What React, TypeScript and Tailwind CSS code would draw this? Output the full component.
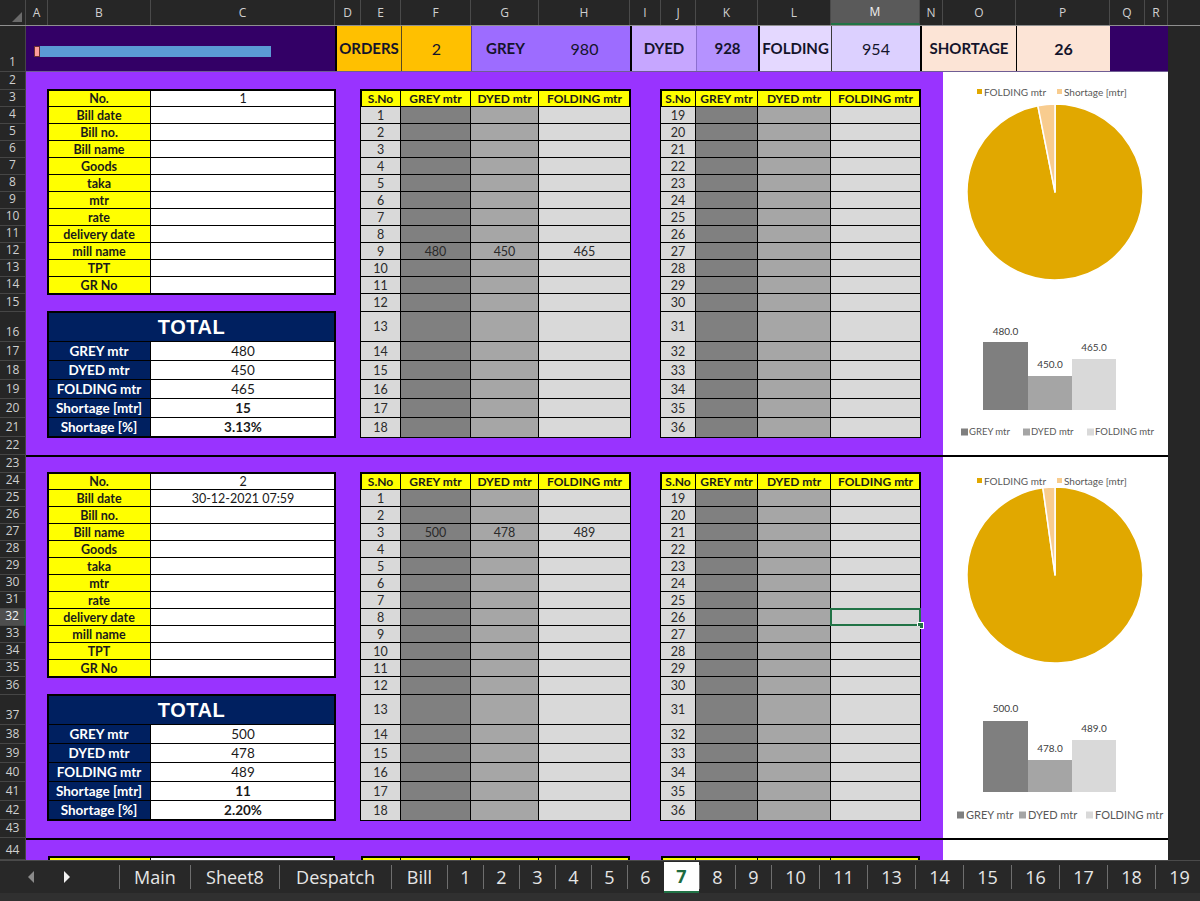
import React from "react";

const cellFont = "font-['Lato','Liberation_Sans',sans-serif]";
const uiFont = "font-['Open_Sans','Noto_Sans',sans-serif]";

const colHeaders = [
  { l: "A", c: "w-[22px]" },
  { l: "B", c: "w-[103px]" },
  { l: "C", c: "w-[184px]" },
  { l: "D", c: "w-[26px]" },
  { l: "E", c: "w-[40px]" },
  { l: "F", c: "w-[70px]" },
  { l: "G", c: "w-[68px]" },
  { l: "H", c: "w-[91px]" },
  { l: "I", c: "w-[31px]" },
  { l: "J", c: "w-[35px]" },
  { l: "K", c: "w-[62px]" },
  { l: "L", c: "w-[73px]" },
  { l: "M", c: "w-[89px]", sel: true },
  { l: "N", c: "w-[23px]" },
  { l: "O", c: "w-[73px]" },
  { l: "P", c: "w-[94px]" },
  { l: "Q", c: "w-[35px]" },
  { l: "R", c: "w-[23px]" },
];

function ColumnHeader() {
  return (
    <div className={`flex h-[26px] shrink-0 border-b border-[#8f8f8f] bg-[#262626] ${uiFont}`}>
      <div className="w-[26px] h-full border-r border-[#4a4a4a] flex items-end justify-end pr-[3px] pb-[3px]">
        <svg width="10" height="10" viewBox="0 0 10 10">
          <path d="M10 0 L10 10 L0 10 Z" fill="#6b6b6b" />
        </svg>
      </div>
      {colHeaders.map((h) => (
        <div
          key={h.l}
          className={`${h.c} h-full flex items-center justify-center border-r border-[#4a4a4a] text-[12px] ${
            h.sel ? "bg-[#5a5a5a] border-b-2 border-b-[#217346] text-[#f0f0f0]" : "text-[#d0d0d0]"
          }`}
        >
          {h.l}
        </div>
      ))}
      <div className="flex-1" />
    </div>
  );
}

function rowHeightClass(r: number): string {
  if (r === 1) return "h-[46px]";
  if ([2, 15, 22, 23, 36, 43].includes(r)) return "h-[18px]";
  if (r === 16 || r === 37) return "h-[30px]";
  if ((r >= 17 && r <= 21) || (r >= 38 && r <= 42)) return "h-[19px]";
  if (r === 44) return "h-[22px]";
  return "h-[17px]";
}

function RowHeader() {
  const rows = Array.from({ length: 44 }, (_, i) => i + 1);
  return (
    <div className={`w-[26px] shrink-0 flex flex-col bg-[#262626] ${uiFont}`}>
      {rows.map((r) => (
        <div
          key={r}
          className={`${rowHeightClass(r)} shrink-0 flex items-end justify-center pb-[3px] border-b border-r border-[#464646] text-[12px] leading-none ${
            r === 32 ? "bg-[#4e4e4e] text-[#f2f2f2] border-r-2 border-r-[#217346]" : "text-[#d0d0d0]"
          }`}
        >
          {r}
        </div>
      ))}
    </div>
  );
}

function Banner() {
  return (
    <div className={`h-[46px] shrink-0 flex border-b border-[#6f5d94] ${cellFont} text-[#14142b]`}>
      <div className="w-[309px] bg-[#330066] pl-[8px] pt-[20px]">
        <div className="flex h-[11px] w-[237px]">
          <div className="w-[6px] bg-[#ff9c9c] border border-[#6a3030]" />
          <div className="flex-1 bg-[#5b9bd5]" />
        </div>
      </div>
      <div className="w-[66px] bg-[#ffc000] border-l-2 border-black flex items-center justify-center font-bold text-[15px]">
        ORDERS
      </div>
      <div className="w-[70px] bg-[#ffc000] border-l border-[#5a4a20] flex items-center justify-center text-[16px]">
        2
      </div>
      <div className="w-[68px] bg-[#9d6cff] border-l border-[#5b3aa0] flex items-center justify-center font-bold text-[15px]">
        GREY
      </div>
      <div className="w-[91px] bg-[#9d6cff] flex items-center justify-center text-[16px]">980</div>
      <div className="w-[66px] bg-[#c6a6ff] border-l-2 border-black flex items-center justify-center font-bold text-[15px]">
        DYED
      </div>
      <div className="w-[62px] bg-[#b592ff] border-l border-[#8c6fd0] flex items-center justify-center font-bold text-[15px]">
        928
      </div>
      <div className="w-[73px] bg-[#e4d8ff] border-l-2 border-black flex items-center justify-center font-bold text-[15px]">
        FOLDING
      </div>
      <div className="w-[89px] bg-[#dcd0ff] border-l border-[#3a3a3a] flex items-center justify-center text-[16px]">
        954
      </div>
      <div className="w-[96px] bg-[#fce4d6] border-l-2 border-black flex items-center justify-center font-bold text-[15px]">
        SHORTAGE
      </div>
      <div className="w-[94px] bg-[#fce4d6] border-l border-black flex items-center justify-center font-bold text-[16px]">
        26
      </div>
      <div className="w-[58px] bg-[#330066]" />
    </div>
  );
}

const infoLabels = [
  "No.",
  "Bill date",
  "Bill no.",
  "Bill name",
  "Goods",
  "taka",
  "mtr",
  "rate",
  "delivery date",
  "mill name",
  "TPT",
  "GR No",
];

function InfoTable({ no, date }: { no: string; date: string }) {
  return (
    <div className={`h-[204px] shrink-0 flex flex-col outline-2 outline-black -outline-offset-1 ${cellFont}`}>
      {infoLabels.map((l, i) => (
        <div
          key={l}
          className={`h-[17px] shrink-0 flex overflow-hidden leading-[15px] ${
            i < infoLabels.length - 1 ? "border-b border-black" : ""
          }`}
        >
          <div className="w-[103px] bg-[#ffff00] border-r border-black flex items-center justify-center font-bold text-[12.5px] text-[#1a1a1a]">
            {l}
          </div>
          <div className="flex-1 bg-white flex items-center justify-center text-[12.5px] text-[#1a1a1a]">
            {i === 0 ? no : i === 1 ? date : ""}
          </div>
        </div>
      ))}
    </div>
  );
}

function TotalTable({ vals }: { vals: { l: string; v: string; b?: boolean }[] }) {
  return (
    <div className={`h-[125px] shrink-0 flex flex-col outline-2 outline-black -outline-offset-1 ${cellFont}`}>
      <div className="h-[30px] shrink-0 bg-[#002060] border-b border-black flex items-center justify-center text-white font-bold text-[20px] tracking-[0.5px] font-['Liberation_Sans',sans-serif]">
        TOTAL
      </div>
      {vals.map((r, i) => (
        <div
          key={r.l}
          className={`h-[19px] shrink-0 flex overflow-hidden leading-[17px] ${
            i < vals.length - 1 ? "border-b border-black" : ""
          }`}
        >
          <div className="w-[103px] bg-[#002060] border-r border-black flex items-center justify-center font-bold text-[13.5px] text-white">
            {r.l}
          </div>
          <div
            className={`flex-1 bg-white flex items-center justify-center text-[13.5px] text-[#1a1a1a] ${
              r.b ? "font-bold" : ""
            }`}
          >
            {r.v}
          </div>
        </div>
      ))}
    </div>
  );
}

const bodyH = [
  "h-[17px]",
  "h-[17px]",
  "h-[17px]",
  "h-[17px]",
  "h-[17px]",
  "h-[17px]",
  "h-[17px]",
  "h-[17px]",
  "h-[17px]",
  "h-[17px]",
  "h-[17px]",
  "h-[18px]",
  "h-[30px]",
  "h-[19px]",
  "h-[19px]",
  "h-[19px]",
  "h-[19px]",
  "h-[19px]",
];

const colBg = ["bg-[#d9d9d9]", "bg-[#808080]", "bg-[#a6a6a6]", "bg-[#d9d9d9]"];
const heads = ["S.No", "GREY mtr", "DYED mtr", "FOLDING mtr"];

function MTable({
  widths,
  start,
  valueIdx,
  vals,
  selIdx,
}: {
  widths: string[];
  start: number;
  valueIdx: number;
  vals: string[];
  selIdx: number;
}) {
  return (
    <div className={`flex flex-col outline-2 outline-black -outline-offset-1 ${cellFont}`}>
      <div className="flex h-[17px] shrink-0 leading-[15px]">
        {heads.map((h, i) => (
          <div
            key={h}
            className={`${widths[i]} h-full bg-[#ffff00] border-b border-black ${
              i < 3 ? "border-r" : ""
            } flex items-center justify-center font-bold text-[12px] text-[#1a1a1a]`}
          >
            {h}
          </div>
        ))}
      </div>
      {bodyH.map((hc, k) => (
        <div key={k} className={`flex ${hc} shrink-0 leading-[15px]`}>
          {widths.map((w, i) => (
            <div
              key={i}
              className={`${w} h-full ${colBg[i]} ${k < 17 ? "border-b" : ""} ${
                i < 3 ? "border-r" : ""
              } border-black flex items-center justify-center text-[12.5px] text-[#2a2a2a] relative`}
            >
              {i === 0 ? start + k : k === valueIdx ? vals[i - 1] : ""}
              {i === 3 && k === selIdx ? (
                <>
                  <div className="absolute -inset-[1px] border-2 border-[#217346]" />
                  <div className="absolute -right-[4px] -bottom-[4px] w-[7px] h-[7px] bg-[#217346] border border-white" />
                </>
              ) : null}
            </div>
          ))}
        </div>
      ))}
    </div>
  );
}

type ChartCfg = {
  pieCy: number;
  frac: number;
  legY: number;
  barBottom: number;
  tops: number[];
  labelY: number[];
  labels: string[];
  leg2Y: number;
  leg2Sq: number[];
  leg2Font: number;
  leg2Gap: number;
};

function Charts({ c }: { c: ChartCfg }) {
  const cx = 112;
  const r = 88;
  const cy = c.pieCy;
  const a = c.frac * 2 * Math.PI;
  const sx = cx - r * Math.sin(a);
  const sy = cy - r * Math.cos(a);
  const foldPath = `M${cx} ${cy} L${cx} ${cy - r} A${r} ${r} 0 1 1 ${sx} ${sy} Z`;
  const shortPath = `M${cx} ${cy} L${sx} ${sy} A${r} ${r} 0 0 1 ${cx} ${cy - r} Z`;
  const bars = [
    { x: 40, w: 45, fill: "#7f7f7f" },
    { x: 85, w: 44, fill: "#a5a5a5" },
    { x: 129, w: 44, fill: "#d9d9d9" },
  ];
  const leg2 = ["GREY mtr", "DYED mtr", "FOLDING mtr"];
  return (
    <svg className="block w-[225px] h-full font-['Lato','Liberation_Sans',sans-serif]">
      <rect x="34" y={c.legY - 3} width="5" height="5" fill="#e1a800" />
      <text x="41" y={c.legY + 3.5} fontSize="10" fill="#595959">
        FOLDING mtr
      </text>
      <rect x="114" y={c.legY - 3} width="5" height="5" fill="#f8cc8f" />
      <text x="121" y={c.legY + 3.5} fontSize="10" fill="#595959">
        Shortage [mtr]
      </text>
      <path d={foldPath} fill="#e1a800" stroke="#ffffff" strokeWidth="1.5" strokeLinejoin="round" />
      <path d={shortPath} fill="#f8cc8f" stroke="#ffffff" strokeWidth="1.5" strokeLinejoin="round" />
      {bars.map((b, i) => (
        <g key={i}>
          <rect x={b.x} y={c.tops[i]} width={b.w} height={c.barBottom - c.tops[i]} fill={b.fill} />
          <text x={b.x + b.w / 2} y={c.labelY[i] + 3.5} fontSize="10" fill="#404040" textAnchor="middle">
            {c.labels[i]}
          </text>
        </g>
      ))}
      {leg2.map((t, i) => (
        <g key={t}>
          <rect x={c.leg2Sq[i]} y={c.leg2Y - 3.5} width="7" height="7" fill={bars[i].fill} />
          <text
            x={c.leg2Sq[i] + c.leg2Gap}
            y={c.leg2Y + c.leg2Font * 0.36}
            fontSize={c.leg2Font}
            fill="#595959"
          >
            {t}
          </text>
        </g>
      ))}
    </svg>
  );
}

type SecData = {
  no: string;
  date: string;
  first: boolean;
  valueIdx: number;
  vals: string[];
  totals: { l: string; v: string; b?: boolean }[];
  selIdx: number;
  chart: ChartCfg;
};

function Section({ d }: { d: SecData }) {
  const top = d.first ? "h-[18px]" : "h-[16px]";
  return (
    <div className={`${d.first ? "h-[385px]" : "h-[383px]"} shrink-0 flex border-b-2 border-black bg-[#9933ff]`}>
      <div className="w-[22px] shrink-0" />
      <div className="w-[287px] shrink-0 flex flex-col">
        <div className={`${top} shrink-0`} />
        <InfoTable no={d.no} date={d.date} />
        <div className="h-[18px] shrink-0" />
        <TotalTable vals={d.totals} />
      </div>
      <div className="w-[26px] shrink-0" />
      <div className="w-[269px] shrink-0 flex flex-col">
        <div className={`${top} shrink-0`} />
        <MTable
          widths={["w-[40px]", "w-[70px]", "w-[68px]", "w-[91px]"]}
          start={1}
          valueIdx={d.valueIdx}
          vals={d.vals}
          selIdx={-1}
        />
      </div>
      <div className="w-[31px] shrink-0" />
      <div className="w-[259px] shrink-0 flex flex-col">
        <div className={`${top} shrink-0`} />
        <MTable
          widths={["w-[35px]", "w-[62px]", "w-[73px]", "w-[89px]"]}
          start={19}
          valueIdx={-1}
          vals={[]}
          selIdx={d.selIdx}
        />
      </div>
      <div className="w-[23px] shrink-0" />
      <div className="w-[225px] shrink-0 bg-white">
        <Charts c={d.chart} />
      </div>
    </div>
  );
}

function Row44() {
  return (
    <div className="h-[20px] shrink-0 flex bg-[#9933ff]">
      <div className="w-[22px] shrink-0" />
      <div className="w-[287px] shrink-0 flex flex-col justify-end">
        <div className="h-[4px] flex border-t-2 border-x-2 border-black">
          <div className="w-[101px] bg-[#ffff00] border-r border-black" />
          <div className="flex-1 bg-white" />
        </div>
      </div>
      <div className="w-[26px] shrink-0" />
      <div className="w-[269px] shrink-0 flex flex-col justify-end">
        <div className="h-[4px] flex border-t-2 border-x-2 border-black bg-[#ffff00]">
          <div className="w-[38px] border-r border-black" />
          <div className="w-[70px] border-r border-black" />
          <div className="w-[68px] border-r border-black" />
          <div className="flex-1" />
        </div>
      </div>
      <div className="w-[31px] shrink-0" />
      <div className="w-[259px] shrink-0 flex flex-col justify-end">
        <div className="h-[4px] flex border-t-2 border-x-2 border-black bg-[#ffff00]">
          <div className="w-[33px] border-r border-black" />
          <div className="w-[62px] border-r border-black" />
          <div className="w-[73px] border-r border-black" />
          <div className="flex-1" />
        </div>
      </div>
      <div className="w-[23px] shrink-0" />
      <div className="w-[225px] shrink-0 bg-white" />
    </div>
  );
}

const tabs: { t: string; c: string; active?: boolean }[] = [
  { t: "Main", c: "w-[71px]" },
  { t: "Sheet8", c: "w-[89px]" },
  { t: "Despatch", c: "w-[112px]" },
  { t: "Bill", c: "w-[56px]" },
  { t: "1", c: "w-[36px]" },
  { t: "2", c: "w-[36px]" },
  { t: "3", c: "w-[36px]" },
  { t: "4", c: "w-[36px]" },
  { t: "5", c: "w-[36px]" },
  { t: "6", c: "w-[36px]" },
  { t: "7", c: "w-[36px]", active: true },
  { t: "8", c: "w-[36px]" },
  { t: "9", c: "w-[36px]" },
  { t: "10", c: "w-[48px]" },
  { t: "11", c: "w-[48px]" },
  { t: "13", c: "w-[48px]" },
  { t: "14", c: "w-[48px]" },
  { t: "15", c: "w-[48px]" },
  { t: "16", c: "w-[48px]" },
  { t: "17", c: "w-[48px]" },
  { t: "18", c: "w-[48px]" },
  { t: "19", c: "w-[48px]" },
];

function TabBar() {
  return (
    <div className={`h-[41px] shrink-0 flex flex-col bg-[#282828] ${uiFont}`}>
      <div className="h-[33px] flex items-stretch border-t border-[#4a4a4a] overflow-hidden">
        <div className="w-[119px] shrink-0 flex items-center">
          <svg width="119" height="20" viewBox="0 0 119 20">
            <path d="M34 4 L28 10 L34 16 Z" fill="#8a8a8a" />
            <path d="M64 4 L70 10 L64 16 Z" fill="#f2f2f2" />
          </svg>
        </div>
        {tabs.map((t) => (
          <div key={t.t} className={`${t.c} shrink-0 flex items-stretch`}>
            <div className={`w-px h-[24px] self-center ${t.active ? "bg-transparent" : "bg-[#6e6e6e]"}`} />
            <div
              className={`flex-1 flex items-center justify-center text-[18px] ${
                t.active
                  ? "bg-white text-[#1e6b40] font-bold border-b-2 border-[#217346] mt-[1px]"
                  : "text-[#e6e6e6]"
              }`}
            >
              {t.t}
            </div>
          </div>
        ))}
      </div>
      <div className="flex-1 bg-[#303030]" />
    </div>
  );
}

const sec1: SecData = {
  no: "1",
  date: "",
  first: true,
  valueIdx: 8,
  vals: ["480", "450", "465"],
  totals: [
    { l: "GREY mtr", v: "480" },
    { l: "DYED mtr", v: "450" },
    { l: "FOLDING mtr", v: "465" },
    { l: "Shortage [mtr]", v: "15", b: true },
    { l: "Shortage [%]", v: "3.13%", b: true },
  ],
  selIdx: -1,
  chart: {
    pieCy: 120,
    frac: 15 / 480,
    legY: 20,
    barBottom: 338,
    tops: [270, 304, 287],
    labelY: [259, 292, 275],
    labels: ["480.0", "450.0", "465.0"],
    leg2Y: 360,
    leg2Sq: [18, 80, 144],
    leg2Font: 9.5,
    leg2Gap: 8,
  },
};

const sec2: SecData = {
  no: "2",
  date: "30-12-2021 07:59",
  first: false,
  valueIdx: 2,
  vals: ["500", "478", "489"],
  totals: [
    { l: "GREY mtr", v: "500" },
    { l: "DYED mtr", v: "478" },
    { l: "FOLDING mtr", v: "489" },
    { l: "Shortage [mtr]", v: "11", b: true },
    { l: "Shortage [%]", v: "2.20%", b: true },
  ],
  selIdx: 7,
  chart: {
    pieCy: 118,
    frac: 11 / 500,
    legY: 24,
    barBottom: 335,
    tops: [264, 303, 283],
    labelY: [251, 291, 271],
    labels: ["500.0", "478.0", "489.0"],
    leg2Y: 358,
    leg2Sq: [14, 76, 143],
    leg2Font: 11,
    leg2Gap: 9,
  },
};

export default function App() {
  return (
    <div className="w-[1200px] h-[901px] overflow-hidden flex flex-col bg-[#262626]">
      <ColumnHeader />
      <div className="flex h-[834px] shrink-0">
        <RowHeader />
        <div className="w-[1142px] shrink-0 flex flex-col">
          <Banner />
          <Section d={sec1} />
          <Section d={sec2} />
          <Row44 />
        </div>
        <div className="flex-1 bg-[#262626]" />
      </div>
      <TabBar />
    </div>
  );
}
